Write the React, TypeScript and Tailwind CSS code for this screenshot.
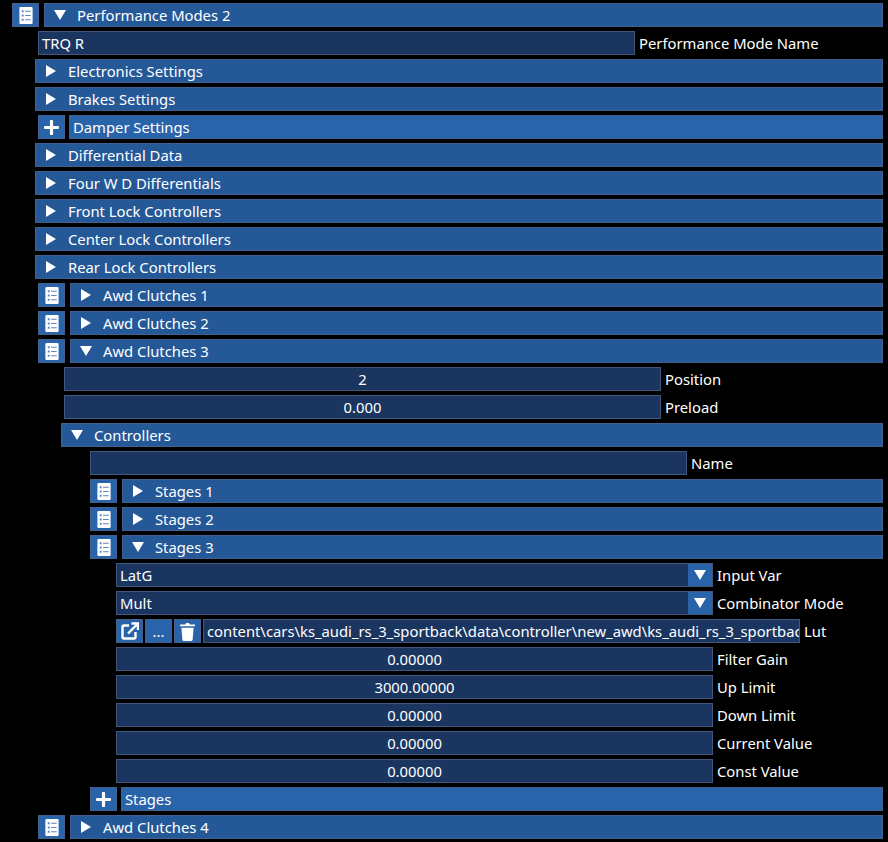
import type { ReactNode } from 'react';
import { FaPlus } from 'react-icons/fa';

const ListIcon = () => (
    <svg viewBox="0 0 14 18" className="h-[17px] w-[14px]">
        <rect width="14" height="18" rx="1" fill="#fff" />
        <path
            fill="#5f86bd"
            d="M2.5 3.5h2v2h-2ZM6 4h6v1H6ZM2.5 8h2v2h-2ZM6 8.5h6v1H6ZM2.5 12.5h2v2h-2ZM6 13h6v1H6Z"
        />
    </svg>
);

const LinkIcon = () => (
    <svg viewBox="0 0 18 18" className="h-[18px] w-[18px]" fill="none" stroke="#fff" strokeWidth="2.4">
        <path d="M8 3.5H3a1.5 1.5 0 0 0-1.5 1.5v10A1.5 1.5 0 0 0 3 16.5h10a1.5 1.5 0 0 0 1.5-1.5v-5" />
        <path d="M7 11.5 16 2.5" />
        <path d="M10.5 1.5h6.5v6.5" />
    </svg>
);

const TrashIcon = () => (
    <svg viewBox="0 0 16 20" className="h-[19px] w-[15px]" fill="#fff">
        <path d="M0 2.5h5.5l1-1.5h3l1 1.5H16v2H0Z" />
        <path d="M1.5 6h13l-1 12.5a1.5 1.5 0 0 1-1.5 1.5H4a1.5 1.5 0 0 1-1.5-1.5Z" />
    </svg>
);

const Arrow = ({ open }: { open: boolean }) => (
    <svg viewBox="0 0 12 12" className="h-3 w-3 shrink-0" fill="#fff">
        {open ? <path d="M0 1h12L6 11Z" /> : <path d="M1 0l10 6-10 6Z" />}
    </svg>
);

const IconButton = ({ children }: { children: ReactNode }) => (
    <button
        type="button"
        className="grid h-6 w-[27px] shrink-0 place-items-center border border-[#44608f] bg-[#2963aa] text-white"
    >
        {children}
    </button>
);

const Header = ({ label, open, hot }: { label?: string; open?: boolean; hot?: boolean }) => (
    <div
        className={`flex h-6 min-w-0 shrink-0 grow items-center border border-[#44608f] ${hot ? 'bg-[#2963aa]' : 'bg-[#245897]'}`}
    >
        {open !== undefined && (
            <span className="ml-[9px] mr-[11px] flex">
                <Arrow open={open} />
            </span>
        )}
        <span className={open === undefined ? 'pl-[3px]' : ''}>{label}</span>
    </div>
);

const Field = ({ value, label, center, combo }: { value: string; label: string; center?: boolean; combo?: boolean }) => (
    <div className="flex h-6 items-center gap-1">
        <div
            className={`flex h-6 w-[597px] shrink-0 items-center border border-[#44567a] bg-[#1a3560] ${center ? 'justify-center' : 'pl-[3px]'}`}
        >
            <span className={combo ? 'flex-1' : ''}>{value}</span>
            {combo && (
                <span className="grid h-full w-6 place-items-center bg-[#2963aa]">
                    <Arrow open />
                </span>
            )}
        </div>
        <span>{label}</span>
    </div>
);

const ListRow = ({ label, open }: { label: string; open: boolean }) => (
    <div className="flex items-center gap-[5px]">
        <IconButton>
            <ListIcon />
        </IconButton>
        <Header label={label} open={open} />
    </div>
);

const AddRow = ({ label }: { label: string }) => (
    <div className="flex items-center gap-1">
        <IconButton>
            <FaPlus className="h-[17px] w-[17px]" />
        </IconButton>
        <Header label={label} hot />
    </div>
);

export default function App() {
    return (
        <div
            className="flex h-[842px] w-[888px] flex-col gap-1 overflow-hidden bg-black pt-[3px] pr-[5px] text-[14.8px] leading-none text-white"
            style={{ fontFamily: '"Noto Sans", sans-serif' }}
        >
            <div className="ml-3">
                <ListRow label="Performance Modes 2" open />
            </div>
            <div className="flex flex-col gap-1 pl-[35px]">
                <div className="pl-[3px]">
                    <Field value="TRQ R" label="Performance Mode Name" />
                </div>
                <Header label="Electronics Settings" open={false} />
                <Header label="Brakes Settings" open={false} />
                <div className="pl-[3px]">
                    <AddRow label="Damper Settings" />
                </div>
                <Header label="Differential Data" open={false} />
                <Header label="Four W D Differentials" open={false} />
                <Header label="Front Lock Controllers" open={false} />
                <Header label="Center Lock Controllers" open={false} />
                <Header label="Rear Lock Controllers" open={false} />
                <div className="flex flex-col gap-1 pl-[3px]">
                    <ListRow label="Awd Clutches 1" open={false} />
                    <ListRow label="Awd Clutches 2" open={false} />
                    <ListRow label="Awd Clutches 3" open />
                    <div className="flex flex-col gap-1 pl-[23px]">
                        <div className="pl-[3px]">
                            <Field value="2" label="Position" center />
                        </div>
                        <div className="pl-[3px]">
                            <Field value="0.000" label="Preload" center />
                        </div>
                        <Header label="Controllers" open />
                        <div className="flex flex-col gap-1 pl-[29px]">
                            <Field value="" label="Name" />
                            <ListRow label="Stages 1" open={false} />
                            <ListRow label="Stages 2" open={false} />
                            <ListRow label="Stages 3" open />
                            <div className="flex flex-col gap-1 pl-[26px]">
                                <Field value="LatG" label="Input Var" combo />
                                <Field value="Mult" label="Combinator Mode" combo />
                                <div className="flex h-6 items-center gap-[2px]">
                                    <IconButton>
                                        <LinkIcon />
                                    </IconButton>
                                    <IconButton>...</IconButton>
                                    <IconButton>
                                        <TrashIcon />
                                    </IconButton>
                                    <div className="flex h-6 w-[597px] shrink-0 items-center overflow-hidden border border-[#44567a] bg-[#1a3560] pl-[3px] whitespace-nowrap">
                                        content\cars\ks_audi_rs_3_sportback\data\controller\new_awd\ks_audi_rs_3_sportback
                                    </div>
                                    <span className="ml-[2px]">Lut</span>
                                </div>
                                <Field value="0.00000" label="Filter Gain" center />
                                <Field value="3000.00000" label="Up Limit" center />
                                <Field value="0.00000" label="Down Limit" center />
                                <Field value="0.00000" label="Current Value" center />
                                <Field value="0.00000" label="Const Value" center />
                            </div>
                            <AddRow label="Stages" />
                        </div>
                    </div>
                    <ListRow label="Awd Clutches 4" open={false} />
                </div>
            </div>
        </div>
    );
}
